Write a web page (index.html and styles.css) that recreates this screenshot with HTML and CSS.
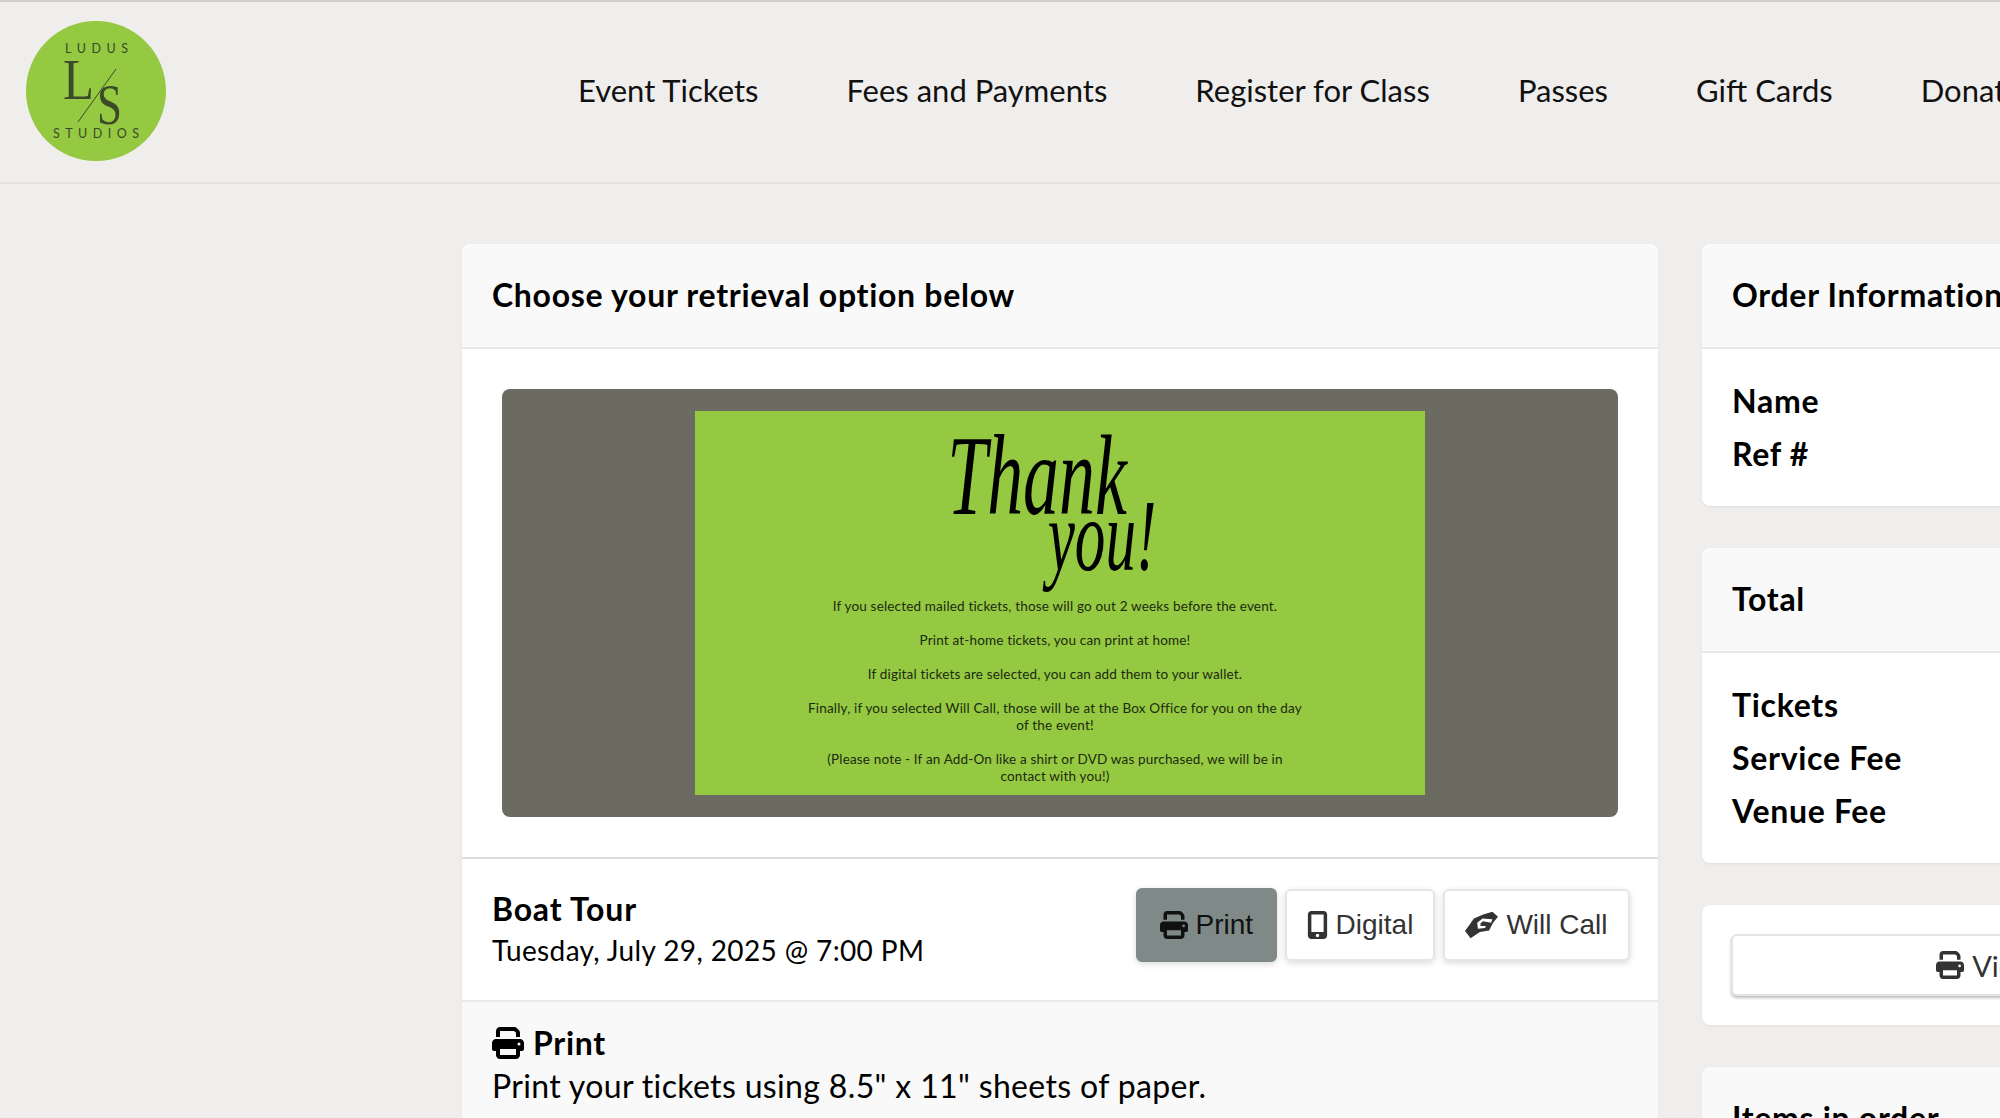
FILE: index.html
```html
<!DOCTYPE html>
<html lang="en">
<head>
    <meta charset="UTF-8">
    <title>Choose your retrieval option</title>
    <link rel="stylesheet" href="styles.css">
</head>
<body>
    <svg class="icon-defs" width="0" height="0">
        <symbol id="i-print" viewBox="0 0 512 512"><path d="M128 0C92.7 0 64 28.7 64 64v96h64V64H354.7L384 93.3V160h64V93.3c0-17-6.7-33.3-18.7-45.3L400 18.7C388 6.7 371.7 0 354.7 0H128zM384 352v32 64H128V384 368 352H384zm64 32h32c17.7 0 32-14.3 32-32V256c0-35.3-28.7-64-64-64H64c-35.3 0-64 28.7-64 64v96c0 17.7 14.3 32 32 32H64v64c0 35.3 28.7 64 64 64H384c35.3 0 64-28.7 64-64V384zM432 248a24 24 0 1 1 0 48 24 24 0 1 1 0-48z"/></symbol>
        <symbol id="i-mobile" viewBox="0 0 384 512"><path d="M16 64C16 28.7 44.7 0 80 0H304c35.3 0 64 28.7 64 64V448c0 35.3-28.7 64-64 64H80c-35.3 0-64-28.7-64-64V64zM224 448a32 32 0 1 0 -64 0 32 32 0 1 0 64 0zM304 64H80V384H304V64z"/></symbol>
        <symbol id="i-hands" viewBox="0 0 640 512"><path fill-rule="evenodd" d="M0 374 Q90 250 173 131 L352 52 L531 0 L640 98 L544 210 L467 361 L288 394 L109 512 Z M531 144 L339 131 L237 210 L250 328 L390 315 L403 276 L301 276 L301 223 L352 184 L506 210 Z"/></symbol>
    </svg>

    <header class="site-header">
        <a class="logo" href="#">
            <svg viewBox="0 0 140 140" width="140" height="140">
                <circle cx="70" cy="70" r="70" fill="#95c942"/>
                <text class="logo-small" x="39" y="32" textLength="63">LUDUS</text>
                <text class="logo-big" x="37" y="78" textLength="31" lengthAdjust="spacingAndGlyphs">L</text>
                <text class="logo-big" x="71" y="103" textLength="25" lengthAdjust="spacingAndGlyphs">S</text>
                <line x1="52" y1="101" x2="90" y2="48" stroke="#3c4a28" stroke-width="1"/>
                <text class="logo-small" x="27" y="117" textLength="86">STUDIOS</text>
            </svg>
        </a>
        <nav class="main-nav">
            <a href="#">Event Tickets</a>
            <a href="#">Fees and Payments</a>
            <a href="#">Register for Class</a>
            <a href="#">Passes</a>
            <a href="#">Gift Cards</a>
            <a href="#">Donate</a>
        </nav>
    </header>

    <main class="page">
        <section class="card main-card">
            <div class="card-header">Choose your retrieval option below</div>
            <div class="banner-wrap">
                <div class="banner">
                    <div class="thank-card">
                        <div class="thank-title">
                            <span class="thank-word">Thank</span>
                            <span class="you-word">you!</span>
                        </div>
                        <p>If you selected mailed tickets, those will go out 2 weeks before the event.</p>
                        <p>Print at-home tickets, you can print at home!</p>
                        <p>If digital tickets are selected, you can add them to your wallet.</p>
                        <p>Finally, if you selected Will Call, those will be at the Box Office for you on the day<br>of the event!</p>
                        <p>(Please note - If an Add-On like a shirt or DVD was purchased, we will be in<br>contact with you!)</p>
                    </div>
                </div>
            </div>
            <div class="event-row">
                <div class="event-info">
                    <div class="event-name">Boat Tour</div>
                    <div class="event-date">Tuesday, July 29, 2025 @ 7:00 PM</div>
                </div>
                <div class="option-btns">
                    <button class="option-btn active"><svg class="icon"><use href="#i-print"/></svg>Print</button>
                    <button class="option-btn digital"><svg class="icon icon-mobile"><use href="#i-mobile"/></svg>Digital</button>
                    <button class="option-btn will-call"><svg class="icon icon-hands"><use href="#i-hands"/></svg>Will Call</button>
                </div>
            </div>
            <div class="option-detail">
                <div class="detail-title"><svg class="icon"><use href="#i-print"/></svg>Print</div>
                <div class="detail-text">Print your tickets using 8.5" x 11" sheets of paper.</div>
            </div>
        </section>

        <aside class="side-col">
            <section class="card">
                <div class="card-header">Order Information</div>
                <div class="card-body">
                    <div class="info-line">Name</div>
                    <div class="info-line">Ref #</div>
                </div>
            </section>
            <section class="card">
                <div class="card-header">Total</div>
                <div class="card-body">
                    <div class="info-line">Tickets</div>
                    <div class="info-line">Service Fee</div>
                    <div class="info-line">Venue Fee</div>
                </div>
            </section>
            <section class="card view-card">
                <button class="view-btn"><svg class="icon"><use href="#i-print"/></svg>View All</button>
            </section>
            <section class="card">
                <div class="card-header">Items in order</div>
            </section>
        </aside>
    </main>
</body>
</html>
```

FILE: styles.css
```css
* {
    margin: 0;
    padding: 0;
    box-sizing: border-box;
}

html,
body {
    height: 1118px;
    overflow: hidden;
}

body {
    background-color: #f0eeed;
    color: #000;
    font-family: 'Lato', 'Noto Sans', sans-serif;
}

.icon-defs {
    position: absolute;
}

.site-header {
    display: flex;
    align-items: center;
    height: 184px;
    padding: 0 0 2px 26px;
    border-top: 2px solid #cfcdcc;
    border-bottom: 2px solid #e6e4e3;
}

.logo {
    display: block;
    height: 140px;
    flex-shrink: 0;
}

.logo-small {
    font-family: 'Lato', sans-serif;
    font-size: 12.5px;
    fill: #3c4a28;
}

.logo-big {
    font-family: 'Liberation Serif', serif;
    font-size: 58px;
    fill: #3c4a28;
}

.main-nav {
    display: flex;
    gap: 88px;
    margin: 0 0 3px 412px;
    white-space: nowrap;
}

.main-nav a {
    font-size: 31px;
    color: #111;
    text-decoration: none;
}

.page {
    display: grid;
    grid-template-columns: 1196px 598px;
    gap: 44px;
    margin-top: 60px;
    padding-left: 462px;
}

.card {
    background-color: #fff;
    border-radius: 8px;
    box-shadow: 0 1px 3px rgba(0, 0, 0, 0.06);
    overflow: hidden;
}

.card-header {
    height: 105px;
    padding: 0 30px 2px;
    display: flex;
    align-items: center;
    background-color: #f9f9f9;
    border-bottom: 2px solid #e9e9e9;
    font-size: 32px;
    font-weight: 700;
    letter-spacing: 0.7px;
}

.banner-wrap {
    padding: 40px;
    border-bottom: 2px solid #dcdcdc;
}

.banner {
    display: flex;
    justify-content: center;
    align-items: center;
    height: 428px;
    background-color: #6b6b61;
    border-radius: 8px;
}

.thank-card {
    width: 730px;
    height: 384px;
    background-color: #95c942;
    color: #1c2a10;
    font-size: 13.5px;
    letter-spacing: 0.17px;
    line-height: 17px;
    text-align: center;
}

.thank-card p {
    margin-bottom: 17px;
    padding-right: 10px;
}

.thank-title {
    display: flex;
    flex-direction: column;
    height: 187px;
    padding-top: 8px;
    color: #000;
    font-family: 'Liberation Serif', serif;
    font-style: italic;
    letter-spacing: 0;
    line-height: 1;
}

.thank-word {
    height: 66px;
    margin-right: 46px;
    font-size: 114px;
    transform: scaleX(0.63);
}

.you-word {
    margin-left: 84px;
    font-size: 102px;
    transform: scaleX(0.6);
}

.event-row {
    display: flex;
    justify-content: space-between;
    align-items: center;
    height: 143px;
    padding: 0 28px 0 30px;
    border-bottom: 2px solid #e9e9e9;
}

.event-info {
    margin-bottom: 1px;
}

.event-name {
    font-size: 32px;
    font-weight: 700;
    letter-spacing: 0.8px;
    line-height: 42px;
}

.event-date {
    font-size: 28px;
    letter-spacing: 0.37px;
    line-height: 40px;
}

.option-btns {
    display: flex;
    align-items: center;
    gap: 8px;
    margin-bottom: 10px;
}

.option-btn {
    display: flex;
    align-items: center;
    height: 72px;
    padding: 0 20px;
    background-color: #fff;
    border: 2px solid #e6e6e6;
    border-radius: 6px;
    box-shadow: 0 2px 6px rgba(0, 0, 0, 0.15);
    color: #333;
    font-family: 'Liberation Sans', sans-serif;
    font-size: 28px;
}

.option-btn.active {
    height: 74px;
    padding: 0 22px;
    background-color: #7f8a88;
    border-color: #7f8a88;
    color: #111;
}

.option-btn.digital {
    padding: 0 19.5px;
}

.option-btn.will-call {
    padding: 0 20.5px;
}

.icon {
    width: 28px;
    height: 28px;
    margin-right: 8px;
    fill: currentColor;
}

.icon-mobile {
    width: 21px;
}

.icon-hands {
    width: 33px;
}

.option-detail {
    height: 260px;
    padding: 19px 30px;
    background-color: #f9f9f9;
}

.detail-title {
    display: flex;
    align-items: center;
    font-size: 32px;
    font-weight: 700;
    letter-spacing: 0.7px;
    line-height: 44px;
}

.detail-title .icon {
    width: 32px;
    height: 32px;
    margin-right: 9px;
}

.detail-text {
    font-size: 32px;
    letter-spacing: 0.35px;
    line-height: 42px;
}

.side-col {
    display: flex;
    flex-direction: column;
    gap: 42px;
}

.card-body {
    padding: 25px 30px 26px;
}

.info-line {
    font-size: 32px;
    font-weight: 700;
    letter-spacing: 0.7px;
    line-height: 53px;
}

.view-card {
    padding: 29px;
}

.view-btn {
    display: flex;
    justify-content: center;
    align-items: center;
    width: 100%;
    height: 62px;
    padding-left: 10px;
    background-color: #fff;
    border: 2px solid #e4e4e4;
    border-radius: 6px;
    box-shadow: 0 2px 3px rgba(0, 0, 0, 0.25);
    color: #333;
    font-family: 'Lato', sans-serif;
    font-size: 29px;
}
```
